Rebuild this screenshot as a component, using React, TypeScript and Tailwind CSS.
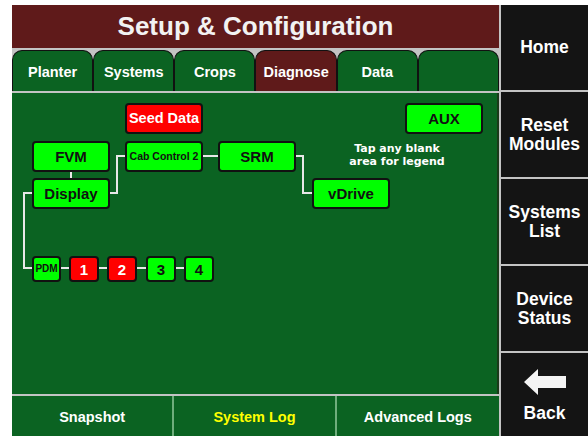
import React from 'react';

const font = { fontFamily: '"Liberation Sans", Arial, sans-serif' };

type NodeProps = {
  label: string;
  x: number;
  y: number;
  w?: number;
  h?: number;
  red?: boolean;
  text?: string;
};

const Node: React.FC<NodeProps> = ({ label, x, y, w = 78, h = 31, red, text = 'text-[15px]' }) => (
  <div
    className={`absolute flex items-center justify-center rounded-[4px] border-2 border-[#111] font-bold leading-none ${
      red ? 'bg-[#ff0000] text-white' : 'bg-[#00ff00] text-[#111]'
    } ${text}`}
    style={{ left: x, top: y, width: w, height: h }}
  >
    {label}
  </div>
);

const tabs = ['Planter', 'Systems', 'Crops', 'Diagnose', 'Data', ''];
const side = [['Home'], ['Reset', 'Modules'], ['Systems', 'List'], ['Device', 'Status']];

export default function App() {
  return (
    <div className="w-[588px] h-[436px] bg-white pt-[5px] pl-[12px] overflow-hidden" style={font}>
      <div className="flex h-[431px] bg-[#c4c4c4]">
        {/* left column */}
        <div className="flex flex-col w-[487px]">
          <div className="h-[43px] bg-[#5f1a1a] flex items-center justify-center text-[#f2f2f2] text-[26px] font-bold">
            Setup &amp; Configuration
          </div>
          <div className="mt-[2px] h-[41px] grid grid-cols-6">
            {tabs.map((t, i) => (
              <div
                key={i}
                className={`flex items-center justify-center rounded-t-[10px] border border-b-0 border-[#111] text-white text-[14.5px] font-bold ${
                  t === 'Diagnose' ? 'bg-[#5f1a1a]' : 'bg-[#0b6322]'
                }`}
              >
                <span className="mt-[3px]">{t}</span>
              </div>
            ))}
          </div>
          <div className="mt-[2px] h-[301px] bg-[#0b6322] relative border-r-2 border-[#1a3a1a]">
            <svg className="absolute inset-0" width="487" height="301">
              <g stroke="#e8e8e8" strokeWidth="2" fill="none">
                <path d="M59 79 V85" />
                <path d="M98 100 H105 V63 H113" />
                <path d="M191 63 H206" />
                <path d="M284 63 H291 V100 H300" />
                <path d="M20 100 H12 V175 H20" />
                <path d="M49 175 H57 M87 175 H95 M125 175 H134 M164 175 H172" />
              </g>
            </svg>
            <Node label="Seed Data" x={113} y={10} red text="text-[14.5px]" />
            <Node label="AUX" x={393} y={10} />
            <Node label="FVM" x={20} y={48} />
            <Node label="Cab Control 2" x={113} y={48} text="text-[10.5px]" />
            <Node label="SRM" x={206} y={48} />
            <Node label="Display" x={20} y={85} />
            <Node label="vDrive" x={300} y={85} />
            <Node label="PDM" x={20} y={163} w={29} h={26} text="text-[10px]" />
            <Node label="1" x={57} y={163} w={30} h={26} red text="text-[15px]" />
            <Node label="2" x={95} y={163} w={30} h={26} red text="text-[15px]" />
            <Node label="3" x={134} y={163} w={30} h={26} text="text-[15px]" />
            <Node label="4" x={172} y={163} w={30} h={26} text="text-[15px]" />
            <div
              className="absolute left-[325px] top-[49px] w-[120px] text-center text-white text-[11px] font-bold leading-[13px]"
              style={{ fontFamily: '"DejaVu Sans", sans-serif' }}
            >
              Tap any blank
              <br />
              area for legend
            </div>
          </div>
          <div className="mt-[2px] h-[40px] grid grid-cols-3 bg-[#0b6322] text-[14.5px] font-bold">
            <div className="flex items-center justify-center pt-[3px] text-white border-r-2 border-[#6fae7c]">Snapshot</div>
            <div className="flex items-center justify-center pt-[3px] text-[#ffff00] border-r-2 border-[#6fae7c]">System Log</div>
            <div className="flex items-center justify-center pt-[3px] text-white">Advanced Logs</div>
          </div>
        </div>
        {/* sidebar */}
        <div className="ml-[2px] flex-1 flex flex-col gap-[2px]">
          {side.map((lines, i) => (
            <div
              key={i}
              className="h-[85px] bg-[#141414] flex flex-col items-center justify-center text-white text-[17.5px] font-bold leading-[19px]"
            >
              {lines.map((l) => (
                <span key={l}>{l}</span>
              ))}
            </div>
          ))}
          <div className="flex-1 bg-[#141414] flex flex-col items-center justify-center pt-[6px] text-white text-[17.5px] font-bold">
            <svg width="42" height="26" viewBox="0 0 42 26" className="mb-[5px]">
              <path d="M0 13 L14 0 V7 H42 V19 H14 V26 Z" fill="#f4f4f4" />
            </svg>
            <span>Back</span>
          </div>
        </div>
      </div>
    </div>
  );
}
